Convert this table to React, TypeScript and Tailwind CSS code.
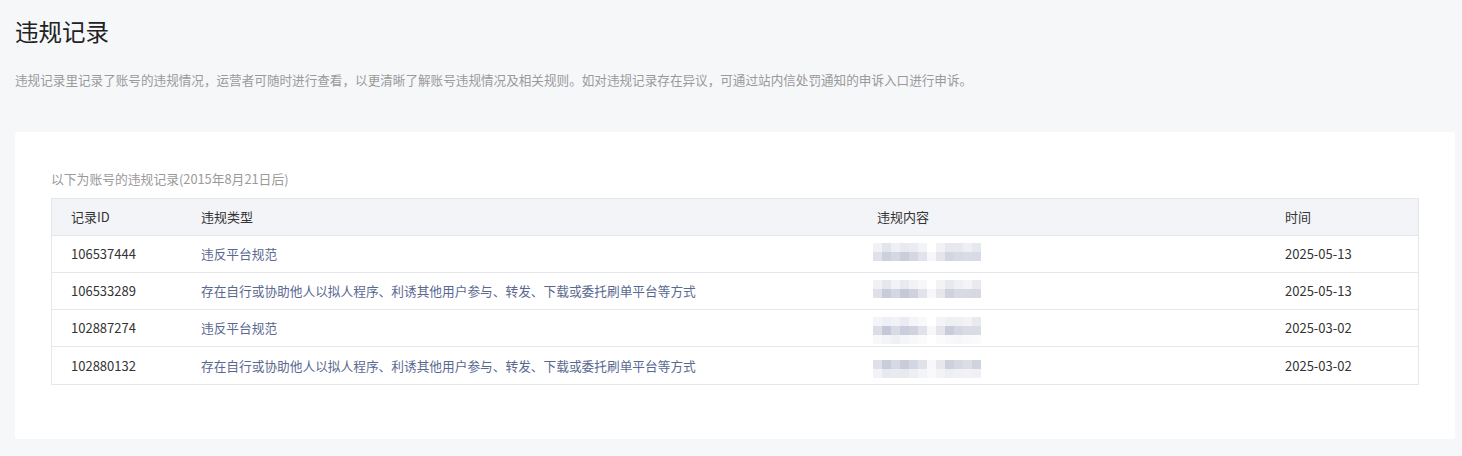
import React from "react";

const rows = [
  { id: "106537444", type: "违反平台规范", time: "2025-05-13", blur: 0 },
  { id: "106533289", type: "存在自行或协助他人以拟人程序、利诱其他用户参与、转发、下载或委托刷单平台等方式", time: "2025-05-13", blur: 1 },
  { id: "102887274", type: "违反平台规范", time: "2025-03-02", blur: 2 },
  { id: "102880132", type: "存在自行或协助他人以拟人程序、利诱其他用户参与、转发、下载或委托刷单平台等方式", time: "2025-03-02", blur: 3 },
];

const blurSets: string[][][] = [
  [
    ["#f1f2f6", "#e3e5ee", "#eff0f5", "#e9eaf1", "#ebecf2", "#f2f3f6", "#ffffff", "#f1f2f5", "#e6e7ef", "#e8e9f0", "#eeeff4", "#e6e8ef"],
    ["#e0e1e9", "#cdd0dd", "#d5d8e3", "#cacdda", "#d4d7e2", "#e1e2ea", "#f6f7f9", "#e4e4ea", "#d3d5e1", "#d7d9e3", "#d9dbe5", "#d8dbe5"],
  ],
  [
    ["#f0f1f5", "#e6e7ee", "#f2f3f6", "#e9eaf0", "#f1f2f5", "#f7f7f9", "#ffffff", "#f3f3f6", "#e8e9ef", "#eff0f4", "#f4f4f7", "#e9eaf0"],
    ["#dfe0e8", "#c8cbd9", "#d4d6e1", "#c5c8d6", "#cfd2de", "#e2e3ea", "#f6f7f9", "#e6e6eb", "#cfd1de", "#d9dbe4", "#d7d9e3", "#d6d8e2"],
  ],
  [
    ["#f4f5f8", "#eff0f5", "#f1f2f6", "#eaecf2", "#f4f5f8", "#f9f9fb", "#ffffff", "#f4f4f7", "#eeeff3", "#eff0f4", "#f3f3f6", "#e9eaf0"],
    ["#dcdde6", "#c5c8d7", "#d9dbe4", "#cacddb", "#d0d3df", "#e1e2e9", "#f6f7f9", "#e4e4ea", "#c9ccda", "#d4d6e1", "#dadce5", "#dadce5"],
    ["#f8f8fa", "#f3f4f7", "#eff0f4", "#f4f5f8", "#f8f8fa", "#fbfbfc", "#ffffff", "#fbfbfc", "#f8f8fa", "#f7f7f9", "#f9f9fb", "#fbfbfc"],
  ],
  [
    ["#dfe0e8", "#c8cddb", "#d7dae4", "#cbccda", "#d2d7e3", "#e1e2e9", "#f8f8fa", "#e7e7ec", "#cdd0dd", "#d6d8e2", "#dcdee6", "#ced3df"],
    ["#f2f3f6", "#e8e9f0", "#eaebf1", "#e9eaf0", "#eeeff3", "#f3f4f7", "#f9f9fb", "#f3f3f6", "#eeeff3", "#f0f1f5", "#f2f2f6", "#f0f1f4"],
  ],
];

function Blur({ set }: { set: number }) {
  const data = blurSets[set];
  return (
    <div className="flex flex-col">
      {data.map((r, i) => (
        <div key={i} className="flex">
          {r.map((c, j) => (
            <div key={j} className="h-[9px] w-[9px]" style={{ backgroundColor: c }} />
          ))}
        </div>
      ))}
    </div>
  );
}

export default function App() {
  return (
    <div
      className="min-h-[456px] bg-[#f6f7f9] pl-[15px] pr-[7px] pb-[18px] pt-[17px] text-[#333]"
      style={{ fontFamily: '"Noto Sans CJK SC", "Noto Sans", sans-serif' }}
    >
      <h1 className="text-[23.5px] leading-[28px] font-normal text-[#222]">违规记录</h1>
      <p className="mt-[26px] text-[12.6px] leading-[18px] text-[#9a9a9a]">
        违规记录里记录了账号的违规情况，运营者可随时进行查看，以更清晰了解账号违规情况及相关规则。如对违规记录存在异议，可通过站内信处罚通知的申诉入口进行申诉。
      </p>
      <div className="mt-[43px] rounded-[3px] bg-white px-[36px] pb-[54px] pt-[38px]">
        <div className="text-[12.8px] leading-[18px] text-[#9a9a9a]">以下为账号的违规记录(2015年8月21日后)</div>
        <div className="mt-[10px] border border-[#e5e6ea] text-[13px]">
          <div className="flex h-[37px] items-center border-b border-[#e5e6ea] bg-[#f3f4f8] text-[#333]">
            <div className="w-[130px] pl-[19px]">记录ID</div>
            <div className="w-[676px] pl-[19px]">违规类型</div>
            <div className="w-[408px] pl-[19px]">违规内容</div>
            <div className="flex-1 pl-[19px]">时间</div>
          </div>
          {rows.map((r, i) => (
            <div
              key={r.id}
              className={`flex h-[37px] items-center ${i < rows.length - 1 ? "border-b border-[#e5e6ea]" : ""}`}
            >
              <div className="w-[130px] pl-[19px] text-[#333]">{r.id}</div>
              <div className="w-[676px] pl-[19px] text-[12.7px] text-[#5a6890]">{r.type}</div>
              <div className={`w-[408px] self-start pl-[15px] ${i === 3 ? "pt-[13px]" : "pt-[7px]"}`}>
                <Blur set={r.blur} />
              </div>
              <div className="flex-1 pl-[19px] text-[#333]">{r.time}</div>
            </div>
          ))}
        </div>
      </div>
    </div>
  );
}
